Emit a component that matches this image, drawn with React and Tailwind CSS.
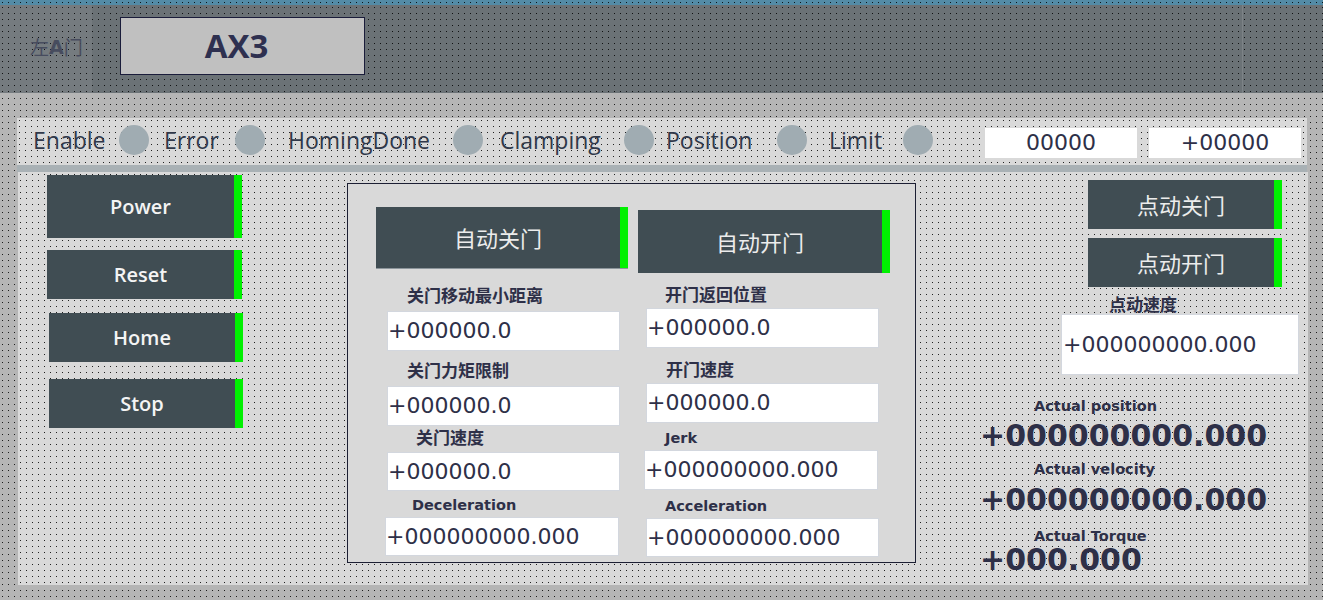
import React from 'react';

// dotted HMI screen texture
const dots = "bg-[radial-gradient(circle_at_2.5px_2.5px,rgba(0,0,0,0.85)_0.6px,transparent_1px)] bg-size-[6px_6px]";

const PushButton = ({ children, className = "", textClass = "" }) => (
  <div className={`flex ${className}`}>
    <div className={`flex-1 bg-[#404d53] flex items-center justify-center ${textClass}`}>
      {children}
    </div>
    <div className="w-[8px] bg-[#00f000]" />
  </div>
);

const Lamp = () => <div className="w-[30px] h-[30px] rounded-full bg-[#a0acb2] shrink-0" />;

const Field = ({ value, className = "" }) => (
  <div className={`bg-white border border-[#d3d7de] flex items-center text-[22px] leading-none text-[#2e3048] font-['DejaVu_Sans',sans-serif] whitespace-nowrap ${className}`}>
    {value}
  </div>
);

const CnLabel = ({ children, className = "" }) => (
  <div className={`text-[17px] leading-[22px] font-bold text-[#2e3048] font-['Noto_Sans_CJK_SC',sans-serif] whitespace-nowrap ${className}`}>
    {children}
  </div>
);

const EnLabel = ({ children, className = "" }) => (
  <div className={`text-[14.5px] leading-[18px] font-bold text-[#2e3048] font-['DejaVu_Sans',sans-serif] whitespace-nowrap ${className}`}>
    {children}
  </div>
);

const BigValue = ({ children, className = "" }) => (
  <div className={`text-[30px] leading-[30px] font-bold text-[#2e3048] font-['DejaVu_Sans',sans-serif] whitespace-nowrap ${className}`}>
    {children}
  </div>
);

export default function App() {
  const btnText = "text-[20px] font-semibold text-[#f4f4f4] font-['Open_Sans',sans-serif]";
  const cnBtnText = "text-[22px] text-[#ececec] font-['Noto_Sans_CJK_SC',sans-serif]";
  const statusText = "text-[23px] leading-none text-[#30384a] font-['Open_Sans',sans-serif] whitespace-nowrap";

  return (
    <div className={`w-[1323px] h-[600px] overflow-hidden bg-[#b5b5b5] ${dots}`}>
      {/* top strip */}
      <div className={`h-[5px] bg-[#538ba6] ${dots}`} />

      {/* header */}
      <div className={`h-[88px] flex bg-[#6b7276] ${dots}`}>
        <div className={`w-[92px] h-full bg-[#757b7f] ${dots} flex items-center pl-[30px] pb-[3px] text-[19px] text-[#474c5e] font-['Noto_Sans_CJK_SC',sans-serif]`}>
          <span>左</span>
          <span className="font-bold font-['DejaVu_Sans',sans-serif]">A</span>
          <span>门</span>
        </div>
        <div className="ml-[28px] mt-[12px] w-[245px] h-[58px] bg-[#c0c0c0] border border-[#1a1c3a] flex items-center justify-center pr-[12px] text-[33px] font-bold text-[#2e3050] font-['Open_Sans',sans-serif]">
          AX3
        </div>
        <div className="ml-auto mr-[80px] w-px h-full bg-[#7d8387]" />
      </div>

      {/* status bar */}
      <div className={`mt-[25px] ml-[17px] w-[1290px] h-[54px] bg-[#d9d9d9] ${dots} border-b-[7px] border-[#a9b1b5] flex items-center pl-[16px] pb-[3px]`}>
        <div className={`w-[86px] ${statusText}`}>Enable</div>
        <Lamp />
        <div className={`ml-[15px] w-[71px] ${statusText}`}>Error</div>
        <Lamp />
        <div className={`ml-[23px] w-[165px] ${statusText}`}>HomingDone</div>
        <Lamp />
        <div className={`ml-[17px] w-[124px] ${statusText}`}>Clamping</div>
        <Lamp />
        <div className={`ml-[12px] w-[111px] ${statusText}`}>Position</div>
        <Lamp />
        <div className={`ml-[22px] w-[74px] ${statusText}`}>Limit</div>
        <Lamp />
        <Field value="00000" className="self-start mt-[10px] ml-[52px] w-[152px] h-[30px] justify-center border-0" />
        <Field value="+00000" className="self-start mt-[10px] ml-[12px] w-[152px] h-[30px] justify-center border-0" />
      </div>

      {/* main panel */}
      <div className={`ml-[18px] w-[1290px] h-[413px] bg-[#d9d9d9] ${dots} flex items-start`}>
        {/* left command buttons */}
        <div className="ml-[29px] mt-[3px] flex flex-col">
          <PushButton className="w-[195px] h-[63px]" textClass={btnText}>Power</PushButton>
          <PushButton className="mt-[12px] w-[195px] h-[49px]" textClass={btnText}>Reset</PushButton>
          <PushButton className="mt-[14px] ml-[2px] w-[194px] h-[49px]" textClass={btnText}>Home</PushButton>
          <PushButton className="mt-[17px] ml-[2px] w-[194px] h-[49px]" textClass={btnText}>Stop</PushButton>
        </div>

        {/* auto open / close panel */}
        <div className="mt-[11px] ml-[104px] w-[569px] h-[380px] border border-[#1c1f33] bg-[#d9d9d9] flex pl-[28px] pt-[23px]">
          <div className="w-[252px] flex flex-col">
            <PushButton className="w-full h-[62px] border-b border-[#8c959b]" textClass={cnBtnText}>自动关门</PushButton>
            <CnLabel className="mt-[15px] h-[22px] pl-[31px]">关门移动最小距离</CnLabel>
            <Field value="+000000.0" className="mt-[5px] ml-[11px] w-[233px] h-[40px]" />
            <CnLabel className="mt-[8px] h-[22px] pl-[31px]">关门力矩限制</CnLabel>
            <Field value="+000000.0" className="mt-[5px] ml-[11px] w-[233px] h-[40px]" />
            <CnLabel className="h-[26px] pl-[40px]">关门速度</CnLabel>
            <Field value="+000000.0" className="ml-[11px] w-[233px] h-[39px]" />
            <EnLabel className="mt-[5px] h-[18px] pl-[36px]">Deceleration</EnLabel>
            <Field value="+000000000.000" className="mt-[3px] ml-[9px] w-[234px] h-[39px]" />
          </div>
          <div className="ml-[10px] w-[252px] flex flex-col">
            <PushButton className="mt-[3px] w-full h-[63px]" textClass={cnBtnText}>自动开门</PushButton>
            <CnLabel className="mt-[10px] h-[22px] pl-[27px]">开门返回位置</CnLabel>
            <Field value="+000000.0" className="mt-[3px] ml-[8px] w-[233px] h-[40px]" />
            <CnLabel className="mt-[10px] h-[22px] pl-[28px]">开门速度</CnLabel>
            <Field value="+000000.0" className="mt-[3px] ml-[8px] w-[233px] h-[40px]" />
            <EnLabel className="mt-[6px] h-[18px] pl-[27px]">Jerk</EnLabel>
            <Field value="+000000000.000" className="mt-[3px] ml-[6px] w-[234px] h-[40px]" />
            <EnLabel className="mt-[7px] h-[18px] pl-[27px]">Acceleration</EnLabel>
            <Field value="+000000000.000" className="mt-[3px] ml-[8px] w-[233px] h-[39px]" />
          </div>
        </div>

        {/* jog + actual values */}
        <div className="ml-[64px] mt-[8px] flex flex-col">
          <PushButton className="ml-[108px] w-[194px] h-[49px]" textClass={cnBtnText}>点动关门</PushButton>
          <PushButton className="mt-[9px] ml-[108px] w-[194px] h-[49px]" textClass={cnBtnText}>点动开门</PushButton>
          <CnLabel className="mt-[6px] h-[21px] ml-[129px]">点动速度</CnLabel>
          <Field value="+000000000.000" className="ml-[81px] w-[238px] h-[61px] pl-[1px]" />
          <EnLabel className="mt-[22px] ml-[54px]">Actual position</EnLabel>
          <BigValue className="mt-[6px]">+000000000.000</BigValue>
          <EnLabel className="mt-[9px] ml-[54px]">Actual velocity</EnLabel>
          <BigValue className="mt-[7px]">+000000000.000</BigValue>
          <EnLabel className="mt-[12px] ml-[54px]">Actual Torque</EnLabel>
          <BigValue>+000.000</BigValue>
        </div>
      </div>
    </div>
  );
}
